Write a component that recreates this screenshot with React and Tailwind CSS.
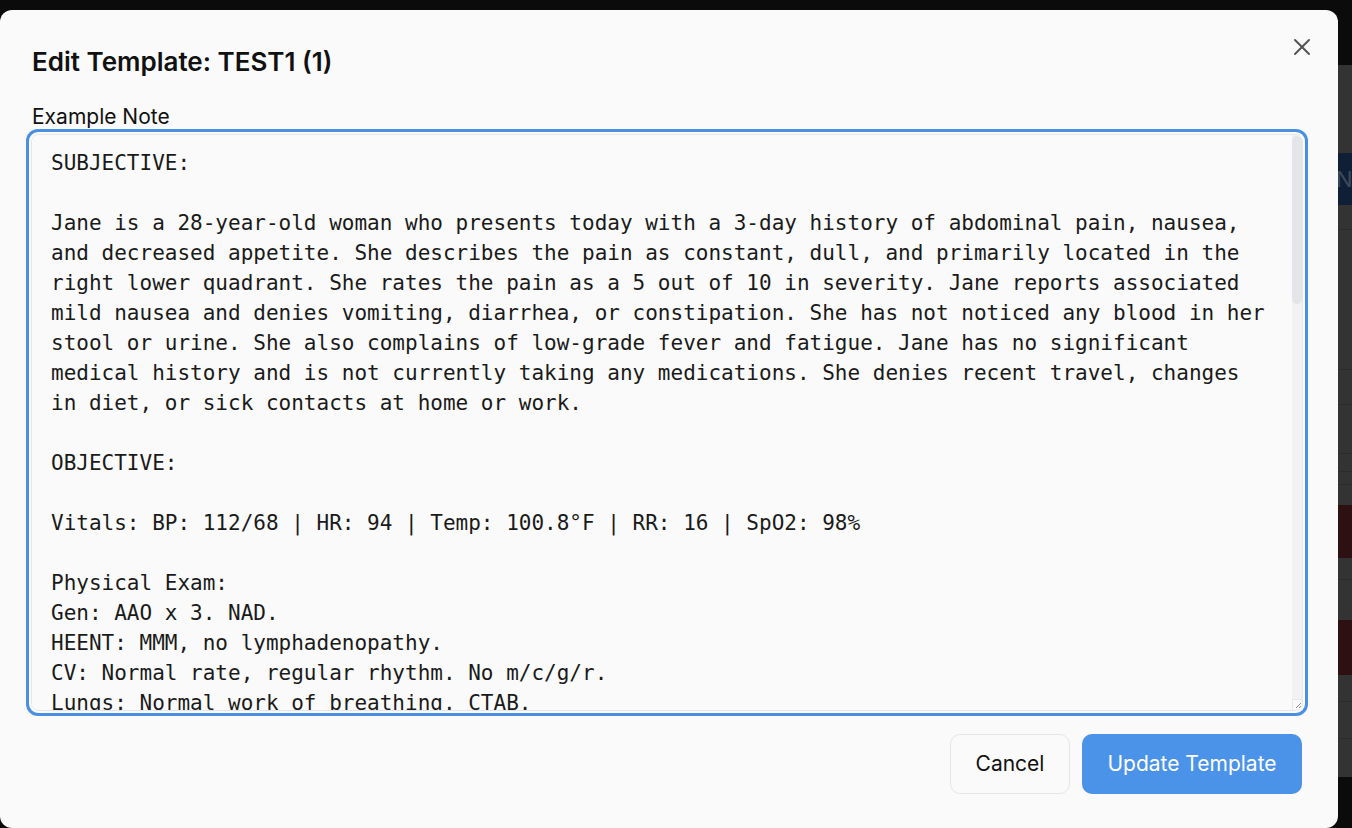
import React from 'react';
import { X } from 'lucide-react';

const noteText = `SUBJECTIVE:

Jane is a 28-year-old woman who presents today with a 3-day history of abdominal pain, nausea, and decreased appetite. She describes the pain as constant, dull, and primarily located in the right lower quadrant. She rates the pain as a 5 out of 10 in severity. Jane reports associated mild nausea and denies vomiting, diarrhea, or constipation. She has not noticed any blood in her stool or urine. She also complains of low-grade fever and fatigue. Jane has no significant medical history and is not currently taking any medications. She denies recent travel, changes in diet, or sick contacts at home or work.

OBJECTIVE:

Vitals: BP: 112/68 | HR: 94 | Temp: 100.8°F | RR: 16 | SpO2: 98%

Physical Exam:
Gen: AAO x 3. NAD.
HEENT: MMM, no lymphadenopathy.
CV: Normal rate, regular rhythm. No m/c/g/r.
Lungs: Normal work of breathing. CTAB.
Abdomen: Soft, non-distended. Tenderness to palpation in the RLQ with mild guarding. Positive McBurney's point tenderness. Negative Rovsing's sign. No rebound tenderness.
Skin: Warm and dry, no rashes.
Neuro: No focal deficits.

Labs:
CBC: WBC 12.4 (elevated), Hgb 13.2, Plt 245
BMP: Within normal limits
Urinalysis: Negative for leukocytes, nitrites, and blood
Urine hCG: Negative

Imaging:
Abdominal ultrasound: Mildly dilated, non-compressible appendix measuring 7 mm with surrounding inflammatory changes. No free fluid.

ASSESSMENT:

Jane is a 28-year-old woman presenting with 3 days of right lower quadrant abdominal pain, nausea, low-grade fever, and leukocytosis. Exam and ultrasound findings are concerning for early acute appendicitis.

Differential diagnosis:
1. Acute appendicitis
2. Ovarian cyst or ovarian torsion
3. Mesenteric adenitis
4. Pelvic inflammatory disease
5. Nephrolithiasis

PLAN:

1. Acute appendicitis, suspected:
- Surgical consultation for evaluation and possible appendectomy
- NPO
- IV fluids: Lactated Ringer's at 125 mL/hr
- IV antibiotics: Ceftriaxone 2 g and Metronidazole 500 mg
- Analgesia: Morphine 4 mg IV q4h PRN pain
- Antiemetic: Ondansetron 4 mg IV q6h PRN nausea

2. Monitoring:
- Serial abdominal exams
- Repeat CBC in the morning
- Strict intake and output

3. Disposition:
- Admit to surgical service
- Patient counseled on diagnosis, plan, and warning signs; she verbalized understanding and agrees with the plan.`;

const App = () => {
    return (
        <div className="relative w-full h-[828px] overflow-hidden bg-[#0b0b0b]">
            {/* Page behind the dialog */}
            <div className="flex flex-col h-full">
                <div className="h-[65px] bg-[#0b0b0b]" />
                <div className="h-[88px] bg-[#333333]" />
                <div className="h-[52px] bg-[#0f1f35] flex items-center overflow-hidden">
                    <span className="ml-[1336px] whitespace-nowrap text-[22px] text-[#3b4a5e]" style={{ fontFamily: 'Inter, sans-serif' }}>Ne</span>
                </div>
                <div className="h-[25px] bg-[#333333] border-b border-[#2b2b2b]" />
                <div className="h-[140px] bg-[#333333] border-b border-[#2b2b2b]" />
                <div className="h-[35px] bg-[#333333] border-b border-[#2b2b2b]" />
                <div className="h-[49px] bg-[#333333] border-b border-[#2b2b2b]" />
                <div className="h-[18px] bg-[#333333] border-b border-[#2b2b2b]" />
                <div className="h-[13px] bg-[#333333] border-b border-[#2b2b2b]" />
                <div className="h-[20px] bg-[#333333]" />
                <div className="h-[53px] bg-[#2d1011]" />
                <div className="h-[22px] bg-[#333333] border-b border-[#2b2b2b]" />
                <div className="h-[40px] bg-[#333333]" />
                <div className="h-[55px] bg-[#2d1011]" />
                <div className="h-[27px] bg-[#333333] border-b border-[#2b2b2b]" />
                <div className="h-[37px] bg-[#333333] border-b border-[#2b2b2b]" />
                <div className="h-[38px] bg-[#333333]" />
                <div className="flex-1 bg-[#0b0b0b]" />
            </div>

            {/* Dialog */}
            <div
                className="absolute left-0 top-[10px] w-[1338px] h-[818px] bg-[#fafafa] rounded-[12px] pl-[32px] pr-[36px] pt-[36px] flex flex-col"
                style={{ fontFamily: 'Inter, "Liberation Sans", sans-serif' }}
            >
                <button className="absolute top-[23px] right-[22px] text-[#555555]">
                    <X size={28} strokeWidth={1.7} />
                </button>

                <h2 className="text-[26px] leading-[32px] font-semibold text-[#111111]">Edit Template: TEST1 (1)</h2>

                <label className="mt-[27px] text-[21px] leading-[24px] text-[#111111]">Example Note</label>

                {/* Note field (focused) */}
                <div className="-mx-[6px] border-[3px] border-[#4a90e2] rounded-[12px] p-[2px]">
                    <div className="flex h-[577px] border border-[#e5e7eb] rounded-[8px] overflow-hidden bg-[#fafafa]">
                        <textarea
                            defaultValue={noteText}
                            className="flex-1 h-full resize-none overflow-hidden bg-[#fafafa] pl-[19px] pr-[21px] pt-[13px] text-[21px] leading-[30px] text-[#1a1a1a] outline-none"
                            style={{ fontFamily: '"DejaVu Sans Mono", monospace' }}
                        />
                        {/* scrollbar */}
                        <div className="w-[10px] flex flex-col bg-[#f2f2f4]">
                            <div className="h-[168px] mt-[1px] rounded-[5px] bg-[#e4e5e8]" />
                            <div className="flex-1" />
                            <div className="h-[11px] bg-[#fafafa] border-l border-t border-[#e5e7eb] flex items-end justify-end">
                                <svg width="9" height="10" viewBox="0 0 9 10">
                                    <path d="M8 3 L3 8 M8 6 L6 8" stroke="#8a8a8a" strokeWidth="1" />
                                </svg>
                            </div>
                        </div>
                    </div>
                </div>

                <div className="flex justify-end gap-[12px] mt-[18px]">
                    <button className="w-[120px] h-[60px] rounded-[10px] border border-[#e6e6e6] bg-[#fafafa] text-[21px] text-[#111111]">
                        Cancel
                    </button>
                    <button className="w-[220px] h-[60px] rounded-[10px] bg-[#4a93e8] text-[21px] text-white">
                        Update Template
                    </button>
                </div>
            </div>
        </div>
    );
}

export default App;
